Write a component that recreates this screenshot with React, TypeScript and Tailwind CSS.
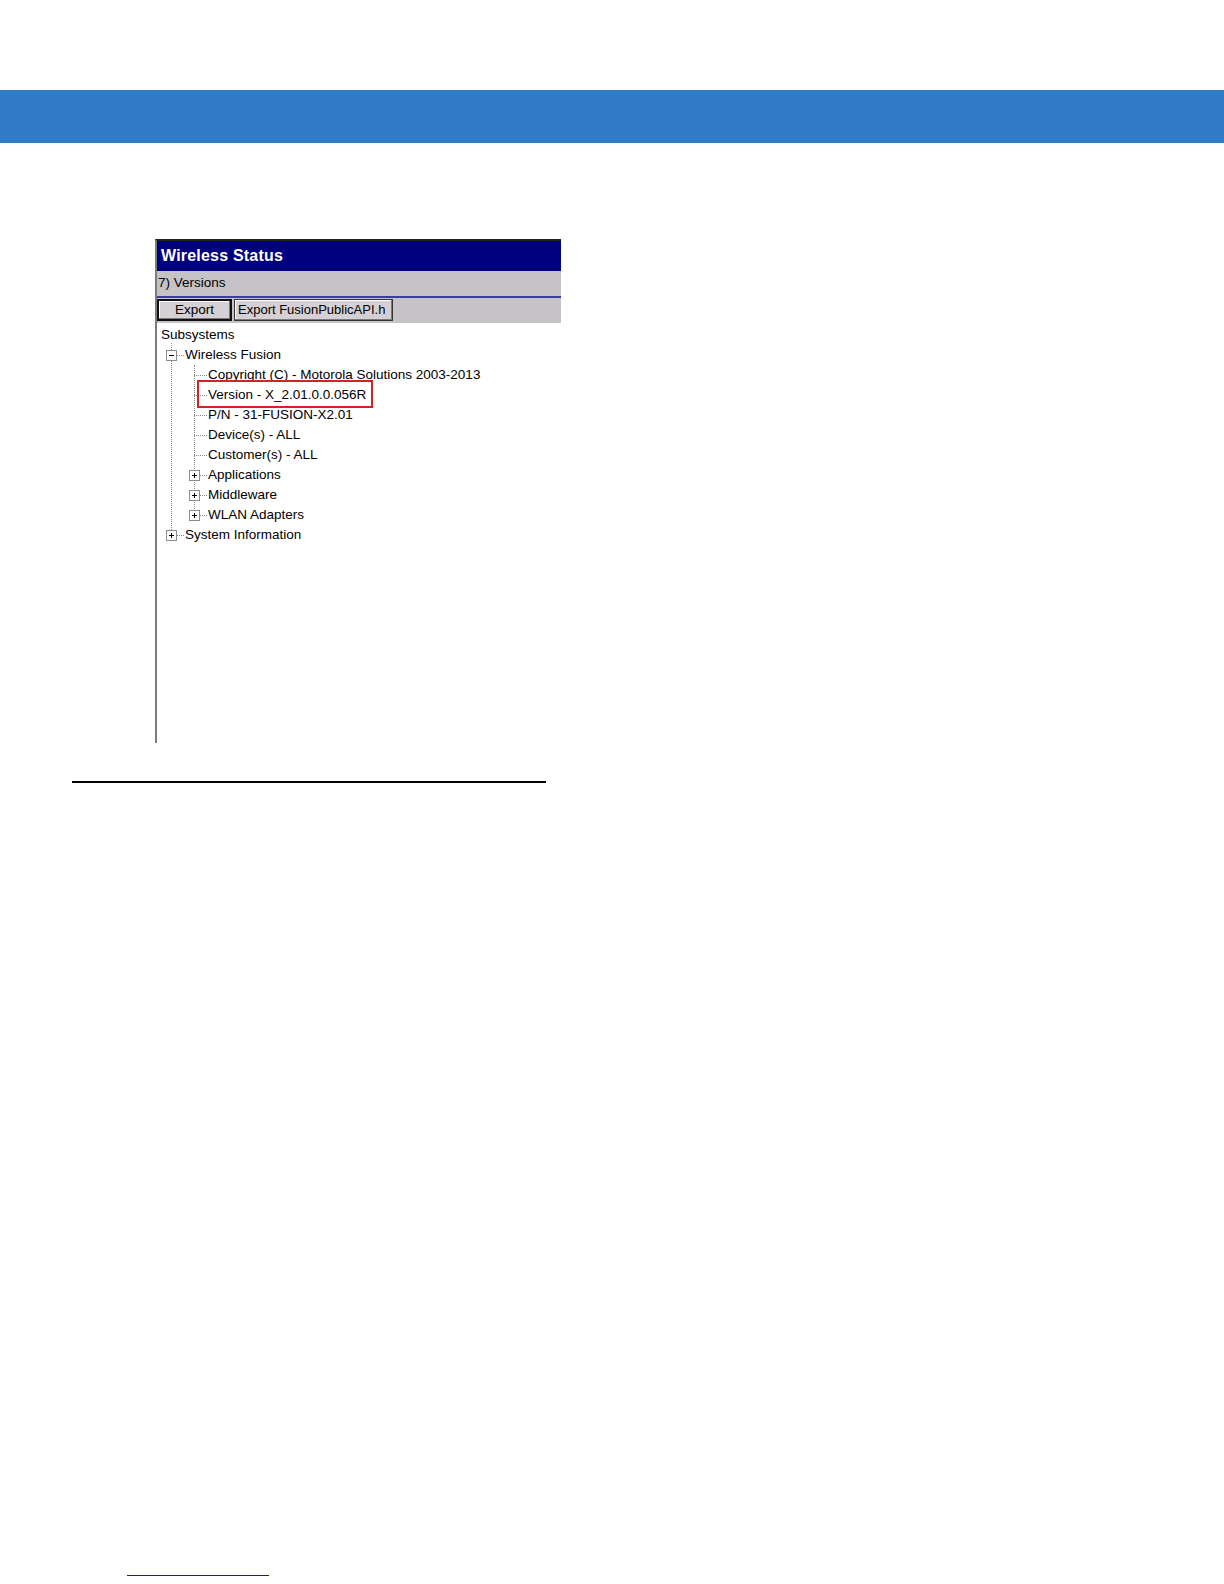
const FONT = { fontFamily: '"Liberation Sans", Arial, sans-serif' };

function Box({ minus }: { minus?: boolean }) {
  return (
    <span className="relative inline-flex h-[11px] w-[11px] shrink-0 items-center justify-center border border-[#8c8c8c] bg-white">
      <span className="absolute h-px w-[5px] bg-black" />
      {!minus && <span className="absolute h-[5px] w-px bg-black" />}
    </span>
  );
}

function Stub({ w }: { w: number }) {
  return <span className="shrink-0 border-t border-dotted border-[#8a8a8a]" style={{ width: w }} />;
}

type Row = { label: string; level: 1 | 2; kind: 'open' | 'closed' | 'leaf' };

const rows: Row[] = [
  { label: 'Wireless Fusion', level: 1, kind: 'open' },
  { label: 'Copyright (C) - Motorola Solutions 2003-2013', level: 2, kind: 'leaf' },
  { label: 'Version - X_2.01.0.0.056R', level: 2, kind: 'leaf' },
  { label: 'P/N - 31-FUSION-X2.01', level: 2, kind: 'leaf' },
  { label: 'Device(s) - ALL', level: 2, kind: 'leaf' },
  { label: 'Customer(s) - ALL', level: 2, kind: 'leaf' },
  { label: 'Applications', level: 2, kind: 'closed' },
  { label: 'Middleware', level: 2, kind: 'closed' },
  { label: 'WLAN Adapters', level: 2, kind: 'closed' },
  { label: 'System Information', level: 1, kind: 'closed' },
];

function TreeRow({ row }: { row: Row }) {
  // offsets measured from the window's inner left edge
  const pad = row.level === 1 ? 9 : row.kind === 'leaf' ? 37 : 32;
  return (
    <div className="flex h-[20px] items-center" style={{ paddingLeft: pad }}>
      {row.kind === 'leaf' ? (
        <Stub w={13} />
      ) : (
        <>
          <Box minus={row.kind === 'open'} />
          <Stub w={7} />
        </>
      )}
      <span className="ml-[1px] whitespace-nowrap text-[13.5px] leading-none text-black">{row.label}</span>
    </div>
  );
}

export default function App() {
  return (
    <div className="relative h-[1584px] w-[1224px] overflow-hidden bg-white" style={FONT}>
      <div className="h-[90px]" />
      <div className="h-[53px] w-full bg-[#2f7bc8]" />

      {/* device screenshot */}
      <div className="ml-[155px] mt-[96px] h-[504px] w-[406px] border-l-2 border-t-2 border-l-[#7c7c7c] border-t-[#222]">
        <div className="flex h-[30px] items-center bg-[#00007f] pl-[4px] text-[16px] font-bold tracking-[0.2px] text-white">
          Wireless Status
        </div>
        <div className="flex h-[25px] items-center bg-[#c6c3c6] pl-[1px] text-[13.5px] text-black">7) Versions</div>
        <div className="h-[2px] bg-[#3c3ca0]" />
        <div className="flex h-[25px] items-center gap-[2px] bg-[#c6c3c6] pb-[1px]">
          <div className="flex h-[22px] w-[75px] items-center justify-center border-2 border-[#111] bg-[#d4d0d4] text-[13.5px] shadow-[inset_-1px_-1px_0_#7a7a7a,inset_1px_1px_0_#fff]">
            Export
          </div>
          <div className="flex h-[22px] w-[159px] items-center whitespace-nowrap border border-[#333] bg-[#d4d0d4] pl-[3px] text-[13px] shadow-[inset_-1px_-1px_0_#7a7a7a,inset_1px_1px_0_#fff]">
            Export FusionPublicAPI.h
          </div>
        </div>

        <div className="relative bg-white pt-[2px]">
          <div className="flex h-[20px] items-center pl-[4px] text-[13.5px] leading-none">Subsystems</div>
          {/* tree guide lines */}
          <div className="absolute left-[14px] top-[20px] h-[193px] border-l border-dotted border-[#8a8a8a]" />
          <div className="absolute left-[37px] top-[42px] h-[150px] border-l border-dotted border-[#8a8a8a]" />
          <div className="relative">
            {rows.map((r) => (
              <TreeRow key={r.label} row={r} />
            ))}
          </div>
          {/* highlight */}
          <div className="absolute left-[40px] top-[57px] h-[28px] w-[176px] border-2 border-[#d42226]" />
        </div>
      </div>

      <div className="ml-[72px] mt-[38px] h-[2px] w-[474px] bg-black" />

      <div className="ml-[127px] mt-[792px] h-px w-[142px] bg-[#1a1a9c]" />
    </div>
  );
}
